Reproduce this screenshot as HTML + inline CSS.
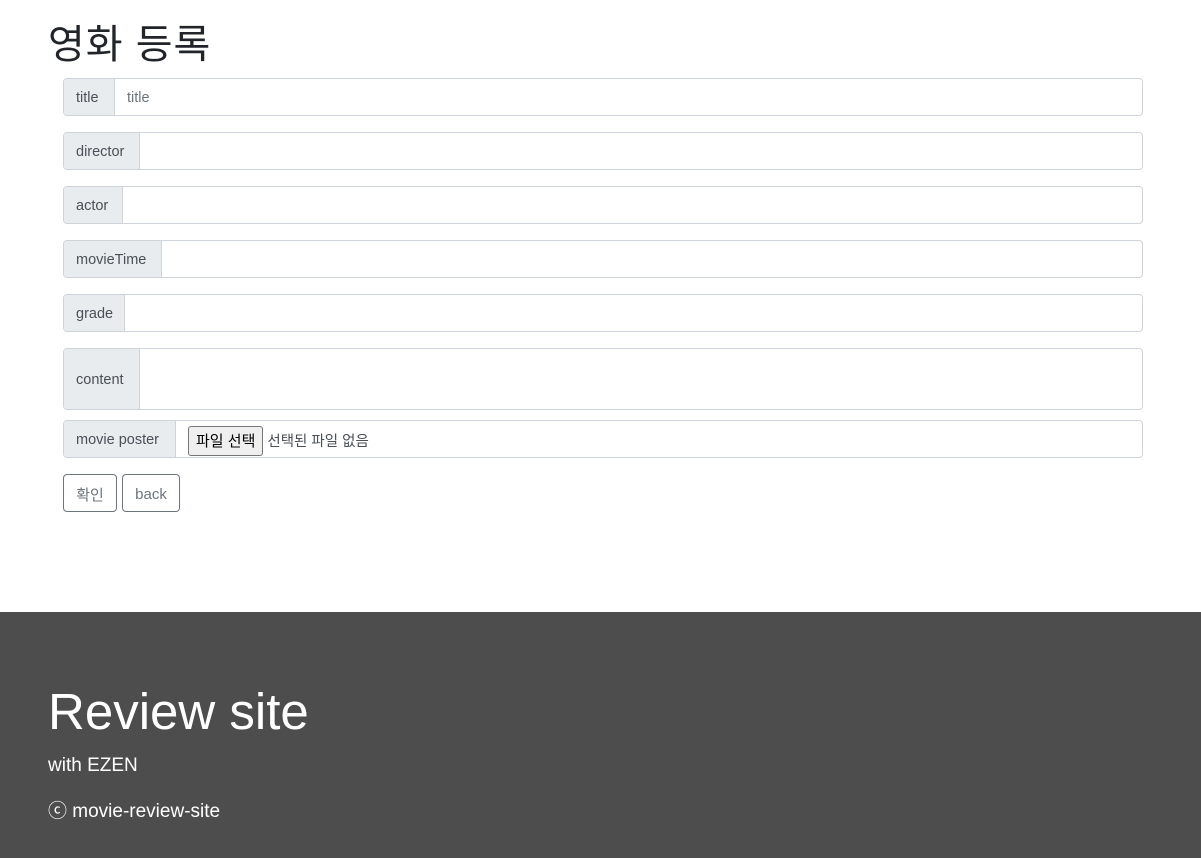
<!DOCTYPE html>
<html><head><meta charset="utf-8"><style>
*{box-sizing:border-box;margin:0;padding:0}
body{width:1201px;height:858px;background:#fff;font-family:"Liberation Sans","Noto Sans CJK KR",sans-serif;position:relative;overflow:hidden}
h1{position:absolute;left:48px;top:19px;font-size:40px;font-weight:400;color:#212529;line-height:52px;letter-spacing:1px;font-family:"Liberation Sans","Noto Sans CJK KR",sans-serif}
.row{position:absolute;left:63px;width:1080px;height:38px;border:1px solid #ced4da;border-radius:4px;display:flex;overflow:hidden}
.lab{background:#e9ecef;border-right:1px solid #ced4da;color:#495057;font-size:14.5px;display:flex;align-items:center;padding-left:12px;padding-top:2px}
.in{flex:1;color:#6c757d;font-size:14.5px;display:flex;align-items:center;padding-left:12px;padding-top:2px}
.btn{position:absolute;top:474px;height:38px;border:1px solid #6c757d;border-radius:4px;color:#6c757d;font-size:15px;display:flex;align-items:center;justify-content:center;padding-top:2px}
.fb{border:1px solid #767676;background:#efefef;border-radius:3px;height:30px;padding:0 7px;color:#000;font-size:15px;display:flex;align-items:center;margin-right:4px}
footer{position:absolute;left:0;top:612px;width:1201px;height:246px;background:#4d4d4d;color:#fff}
</style></head><body>
<h1>영화 등록</h1>
<div class="row" style="top:78px"><div class="lab" style="width:51px">title</div><div class="in">title</div></div>
<div class="row" style="top:132px"><div class="lab" style="width:76px">director</div><div class="in"></div></div>
<div class="row" style="top:186px"><div class="lab" style="width:59px">actor</div><div class="in"></div></div>
<div class="row" style="top:240px"><div class="lab" style="width:98px">movieTime</div><div class="in"></div></div>
<div class="row" style="top:294px"><div class="lab" style="width:61px">grade</div><div class="in"></div></div>
<div class="row" style="top:348px;height:62px"><div class="lab" style="width:76px">content</div><div class="in"></div></div>
<div class="row" style="top:420px"><div class="lab" style="width:112px">movie poster</div><div class="in" style="color:#495057;padding-top:3px"><span class="fb">파일 선택</span>선택된 파일 없음</div></div>
<div class="btn" style="left:63px;width:54px">확인</div>
<div class="btn" style="left:122px;width:58px">back</div>
<footer>
<div style="position:absolute;left:48px;top:65px;font-size:51px;line-height:70px">Review site</div>
<div style="position:absolute;left:48px;top:142px;font-size:19px;line-height:24px">with EZEN</div>
<div style="position:absolute;left:48px;top:188px;font-size:19px;line-height:24px">ⓒ movie-review-site</div>
</footer>
</body></html>
